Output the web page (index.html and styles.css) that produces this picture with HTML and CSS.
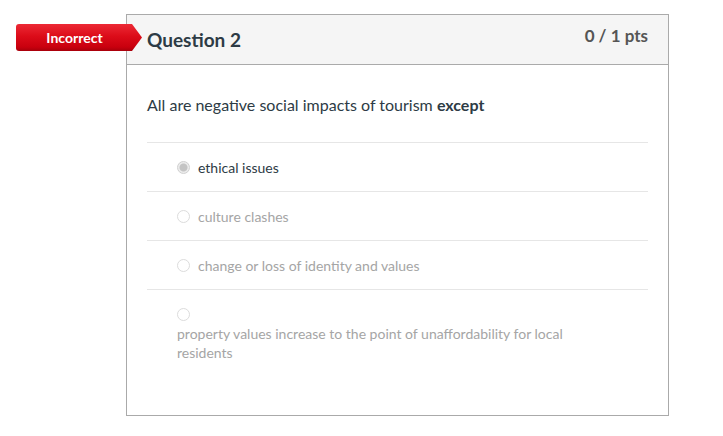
FILE: index.html
```html
<!DOCTYPE html>
<html lang="en">
<head>
<meta charset="utf-8">
<title>Question 2</title>
<link rel="stylesheet" href="styles.css">
</head>
<body>
<div class="page">
  <div class="card">
    <div class="badge"><span class="badge-text">Incorrect</span></div>
    <div class="card-header">
      <h2 class="title">Question 2</h2>
      <div class="points">0 / 1 pts</div>
    </div>
    <div class="card-body">
      <p class="question">All are negative social impacts of tourism <strong>except</strong></p>
      <div class="answers">
        <div class="answer answer--selected">
          <span class="radio radio--checked"></span>
          <span class="answer-text">ethical issues</span>
        </div>
        <div class="answer">
          <span class="radio"></span>
          <span class="answer-text">culture clashes</span>
        </div>
        <div class="answer">
          <span class="radio"></span>
          <span class="answer-text">change or loss of identity and values</span>
        </div>
        <div class="answer answer--stacked">
          <span class="radio"></span>
          <span class="answer-text">property values increase to the point of unaffordability for local residents</span>
        </div>
      </div>
    </div>
  </div>
</div>
</body>
</html>
```

FILE: styles.css
```css
* { box-sizing: border-box; }
html, body { margin: 0; padding: 0; background: #fff; }
body { font-family: Lato, "Open Sans", "Liberation Sans", sans-serif; color: #2d3b45; }

.page { padding: 14px 0 0 126px; }

.card {
  position: relative;
  width: 543px;
  height: 402px;
  border: 1px solid #aaaaaa;
}

.badge {
  position: absolute;
  left: -111px;
  top: 9px;
  z-index: 2;
  width: 126px;
  height: 27px;
  display: flex;
  align-items: center;
  border-radius: 3px 0 0 3px;
  background: linear-gradient(to bottom, #ec2a35 0%, #dc0c19 45%, #c9000e 85%, #a8000b 100%);
  clip-path: polygon(0 0, calc(100% - 10px) 0, 100% 50%, calc(100% - 10px) 100%, 0 100%);
}
.badge-text {
  width: 117px;
  text-align: center;
  color: #fff;
  font-weight: 700;
  font-size: 14px;
  line-height: 16px;
}

.card-header {
  height: 50px;
  background: #f5f5f5;
  border-bottom: 1px solid #aaaaaa;
  display: flex;
  justify-content: space-between;
  align-items: flex-start;
  padding: 0 20px;
}
.title {
  margin: 14px 0 0;
  font-size: 19px;
  line-height: 1.2;
  font-weight: 700;
  color: #2d3b45;
}
.points {
  margin-top: 11px;
  font-size: 17px;
  line-height: 1.2;
  font-weight: 700;
  color: #555555;
}

.card-body { padding: 0 20px; }

.question {
  margin: 0;
  padding-top: 28px;
  font-size: 16px;
  line-height: 24px;
  height: 77px;
}
.question strong { font-weight: 700; }

.answer {
  height: 49px;
  border-top: 1px solid #e6e6e6;
  display: flex;
  align-items: center;
  padding-left: 30px;
  font-size: 14px;
  color: #a5a5a5;
}
.answer--selected { color: #2d3b45; }
.answer--stacked {
  height: auto;
  flex-direction: column;
  align-items: flex-start;
  padding-top: 18px;
  line-height: 19px;
}
.answer--stacked .radio { margin-bottom: 3px; }
.answer--stacked .answer-text { max-width: 400px; }

.radio {
  width: 13px;
  height: 13px;
  border-radius: 50%;
  border: 1px solid #dcdcdc;
  background: #fff;
  margin-right: 8px;
  flex: none;
}
.radio--checked {
  border-color: #d0d0d0;
  background: radial-gradient(circle, #c4c4c4 0 3.5px, #ececec 4.5px);
}
```
